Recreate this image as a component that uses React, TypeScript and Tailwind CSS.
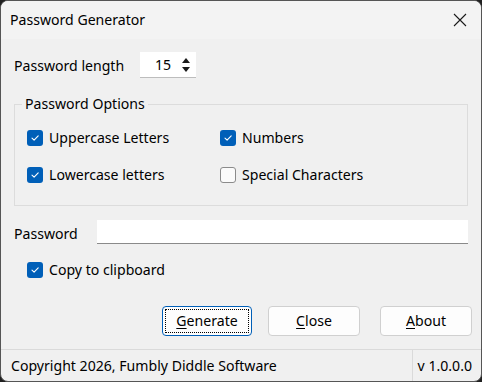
import React from "react";

function Check({ checked }: { checked: boolean }) {
  if (!checked) {
    return <span className="inline-block h-4 w-4 shrink-0 rounded-[3px] border border-[#8b8b8b] bg-[#fbfbfb]" />;
  }
  return (
    <span className="flex h-4 w-4 shrink-0 items-center justify-center rounded-[3px] bg-[#005fb8]">
      <svg width="10" height="10" viewBox="0 0 10 10" fill="none">
        <path d="M2 5.2 L4.1 7.2 L8.2 2.8" stroke="white" strokeWidth="1.1" strokeLinecap="round" strokeLinejoin="round" />
      </svg>
    </span>
  );
}

function Option({ label, checked }: { label: string; checked: boolean }) {
  return (
    <div className="flex h-[20px] items-center gap-[6px]">
      <Check checked={checked} />
      <span>{label}</span>
    </div>
  );
}

function Btn({ first, rest, focused, cls }: { first: string; rest: string; focused?: boolean; cls: string }) {
  return (
    <button
      className={
        "flex h-[30px] items-center justify-center rounded-[4px] border bg-[#fdfdfd] " +
        cls +
        (focused ? " border-[#005fb8] p-[2px]" : " border-[#d0d0d0]")
      }
    >
      {focused ? (
        <span className="flex h-full w-full items-center justify-center border border-dotted border-black">
          <span className="underline underline-offset-2">{first}</span>
          {rest}
        </span>
      ) : (
        <>
          <span className="underline underline-offset-2">{first}</span>
          {rest}
        </>
      )}
    </button>
  );
}

export default function App() {
  return (
    <div className="h-[382px] w-[482px] bg-[#202020]">
      <div
        className="flex h-full w-full flex-col overflow-hidden rounded-[8px] border border-[#555555] bg-[#f0f0f0] text-[14.1px] leading-[20px] text-black"
        style={{ fontFamily: '"Noto Sans", sans-serif' }}
      >
        {/* title bar */}
        <div className="flex h-[38px] shrink-0 items-center justify-between bg-[#f3f3f3] pl-[9px] pr-[14px]">
          <span>Password Generator</span>
          <svg width="14" height="14" viewBox="0 0 14 14">
            <path d="M1 1 L13 13 M13 1 L1 13" stroke="#1a1a1a" strokeWidth="1.1" />
          </svg>
        </div>

        <div className="flex flex-1 flex-col px-[13px]">
          <div className="mt-[13px] flex items-center">
            <span className="mt-[2px] w-[126px]">Password length</span>
            <div className="flex h-[26px] w-[56px] items-center justify-end gap-[10px] border-b border-[#bdbdbd] bg-white pr-[5px]">
              <span>15</span>
              <svg width="10" height="22" viewBox="0 0 10 22">
                <path d="M1 9 L5 4 L9 9 Z" fill="#1a1a1a" />
                <path d="M1 13 L5 18 L9 13 Z" fill="#1a1a1a" />
              </svg>
            </div>
          </div>

          <fieldset className="mt-[16px] h-[112px] border border-[#dcdcdc] pl-[12px]">
            <legend className="ml-[-5px] px-[3px]">Password Options</legend>
            <div className="mt-[14px] grid grid-cols-[193px_1fr] gap-y-[17px]">
              <Option label="Uppercase Letters" checked />
              <Option label="Numbers" checked />
              <Option label="Lowercase letters" checked />
              <Option label="Special Characters" checked={false} />
            </div>
          </fieldset>

          <div className="mt-[14px] flex items-center">
            <span className="mt-[4px] w-[83px]">Password</span>
            <div className="h-[24px] flex-1 border-b border-[#8a8a8a] bg-white" />
          </div>

          <div className="ml-[13px] mt-[16px]">
            <Option label="Copy to clipboard" checked />
          </div>

          <div className="mr-[-4px] mt-[26px] flex justify-end">
            <Btn first="G" rest="enerate" focused cls="w-[90px]" />
            <Btn first="C" rest="lose" cls="ml-[16px] w-[92px]" />
            <Btn first="A" rest="bout" cls="ml-[20px] w-[92px]" />
          </div>
        </div>

        {/* status bar */}
        <div className="flex h-[32px] shrink-0 items-center border-t border-[#dadada]">
          <span className="flex-1 pl-[10px]">Copyright 2026, Fumbly Diddle Software</span>
          <span className="flex h-full items-center border-l border-[#dadada] pl-[5px] pr-[9px]">v 1.0.0.0</span>
        </div>
      </div>
    </div>
  );
}
